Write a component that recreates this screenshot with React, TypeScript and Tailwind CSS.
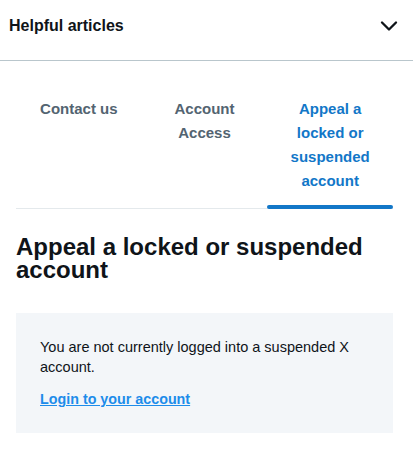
import { ChevronDown } from 'lucide-react';

const tabs = [
  { label: 'Contact us', active: false },
  { label: 'Account Access', active: false },
  { label: 'Appeal a locked or suspended account', active: true },
];

export default function App() {
  return (
    <div className="w-[413px] h-[457px] bg-white font-['Liberation_Sans',Arial,sans-serif] text-[#0f1419]">
      {/* Header */}
      <div className="h-[61px] flex items-center justify-between pl-[9px] pr-[10px] pb-[8px] border-b border-[#b9c6cc]">
        <h2 className="text-[16px] font-bold">Helpful articles</h2>
        <ChevronDown size={28} strokeWidth={2} className="text-[#0f1419]" />
      </div>

      <div className="pl-4 pr-5">
        {/* Tabs */}
        <div className="mt-[36px] grid grid-cols-3 border-b border-[#e4e9ec]">
          {tabs.map((t) => (
            <div key={t.label} className="relative flex justify-center pb-[15px]">
              <span
                className={
                  'text-[15px] font-bold leading-6 text-center px-[20px] ' +
                  (t.active ? 'text-[#1277c8]' : 'text-[#536471]')
                }
              >
                {t.label}
              </span>
              {t.active && (
                <div className="absolute left-0 right-0 -bottom-px h-[4px] rounded-full bg-[#1277c8]" />
              )}
            </div>
          ))}
        </div>

        {/* Article */}
        <h1 className="mt-[26px] text-[24px] font-bold leading-[23px]">Appeal a locked or suspended account</h1>

        <div className="mt-[32px] bg-[#f3f6f9] px-6 pt-6 pb-6">
          <p className="text-[14.5px] leading-5 text-[#0f1419]">
            You are not currently logged into a suspended X account.
          </p>
          <a href="#" className="block mt-3 text-[14.3px] leading-5 font-bold text-[#1d8cea] underline">
            Login to your account
          </a>
        </div>
      </div>
    </div>
  );
}
